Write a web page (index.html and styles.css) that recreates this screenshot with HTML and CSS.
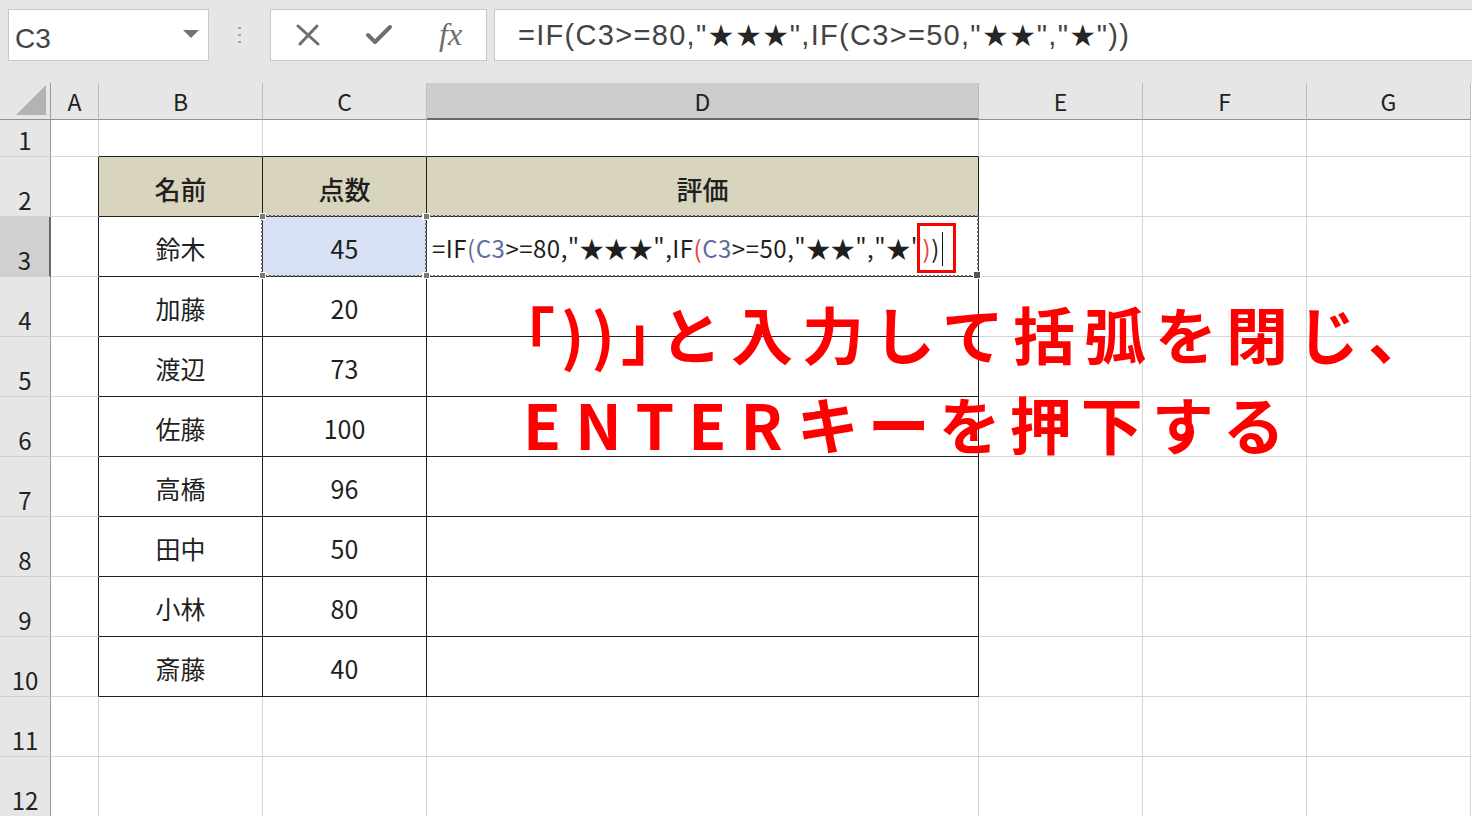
FILE: index.html
```html
<!DOCTYPE html>
<html lang="ja">
<head>
    <meta charset="UTF-8">
    <meta name="viewport" content="width=device-width, initial-scale=1.0">
    <title>評価 - IF関数</title>
    <link rel="stylesheet" href="styles.css">
</head>
<body>
    <div class="workbook">
        <!-- name box + formula bar -->
        <div class="formula-bar">
            <div class="name-box">
                <span>C3</span>
                <svg class="drop" width="16" height="8" viewBox="0 0 16 8"><polygon points="0,0 16,0 8,8" fill="#737373"/></svg>
            </div>
            <div class="grip"><i></i><i></i><i></i></div>
            <div class="fx-buttons">
                <svg width="26" height="26" viewBox="0 0 26 26"><path d="M3 4 L23 22 M22 4 L5 22" stroke="#6e6e6e" stroke-width="3" stroke-linecap="round" fill="none"/></svg>
                <svg width="28" height="26" viewBox="0 0 28 26"><path d="M3 13 L10 20 L25 5" stroke="#6e6e6e" stroke-width="4" stroke-linecap="round" stroke-linejoin="round" fill="none"/></svg>
                <span class="fx">fx</span>
            </div>
            <div class="formula-input">=IF(C3&gt;=80,"<b>★★★</b>",IF(C3&gt;=50,"<b>★★</b>","<b>★</b>"))</div>
        </div>

        <div class="sheet">
            <!-- column headers -->
            <div class="ch corner"><svg width="32" height="32" viewBox="0 0 32 32"><polygon points="31,1 31,31 1,31" fill="#b3b3b3"/></svg></div>
            <div class="ch">A</div>
            <div class="ch">B</div>
            <div class="ch">C</div>
            <div class="ch active">D</div>
            <div class="ch">E</div>
            <div class="ch">F</div>
            <div class="ch">G</div>

            <!-- row 1 -->
            <div class="rh">1</div>
            <div class="cell"></div>
            <div class="cell top-edge"></div>
            <div class="cell top-edge"></div>
            <div class="cell top-edge"></div>
            <div class="cell"></div>
            <div class="cell"></div>
            <div class="cell"></div>

            <!-- row 2 -->
            <div class="rh">2</div>
            <div class="cell left-edge"></div>
            <div class="cell tc th">名前</div>
            <div class="cell tc th">点数</div>
            <div class="cell tc th">評価</div>
            <div class="cell"></div>
            <div class="cell"></div>
            <div class="cell"></div>

            <!-- row 3 -->
            <div class="rh active">3</div>
            <div class="cell left-edge"></div>
            <div class="cell tc">鈴木</div>
            <div class="cell tc ref">45
                <span class="knob tl"></span><span class="knob tr"></span><span class="knob bl"></span><span class="knob br"></span>
            </div>
            <div class="cell tc editing">
                <span class="entry">=IF<span class="p1">(</span><span class="r">C3</span>&gt;=80,"★★★",IF<span class="p2">(</span><span class="r">C3</span>&gt;=50,"★★","★"<span class="tail"><span class="mark"></span><span class="p2">)</span>)<span class="caret"></span></span></span>
                <span class="knob tl"></span><span class="knob bl"></span><span class="knob br big"></span>
            </div>
            <div class="cell"></div>
            <div class="cell"></div>
            <div class="cell"></div>

            <!-- rows 4-10 -->
            <div class="rh">4</div>
            <div class="cell left-edge"></div>
            <div class="cell tc">加藤</div>
            <div class="cell tc">20</div>
            <div class="cell tc"></div>
            <div class="cell"></div>
            <div class="cell"></div>
            <div class="cell"></div>

            <div class="rh">5</div>
            <div class="cell left-edge"></div>
            <div class="cell tc">渡辺</div>
            <div class="cell tc">73</div>
            <div class="cell tc"></div>
            <div class="cell"></div>
            <div class="cell"></div>
            <div class="cell"></div>

            <div class="rh">6</div>
            <div class="cell left-edge"></div>
            <div class="cell tc">佐藤</div>
            <div class="cell tc">100</div>
            <div class="cell tc"></div>
            <div class="cell"></div>
            <div class="cell"></div>
            <div class="cell"></div>

            <div class="rh">7</div>
            <div class="cell left-edge"></div>
            <div class="cell tc">高橋</div>
            <div class="cell tc">96</div>
            <div class="cell tc"></div>
            <div class="cell"></div>
            <div class="cell"></div>
            <div class="cell"></div>

            <div class="rh">8</div>
            <div class="cell left-edge"></div>
            <div class="cell tc">田中</div>
            <div class="cell tc">50</div>
            <div class="cell tc"></div>
            <div class="cell"></div>
            <div class="cell"></div>
            <div class="cell"></div>

            <div class="rh">9</div>
            <div class="cell left-edge"></div>
            <div class="cell tc">小林</div>
            <div class="cell tc">80</div>
            <div class="cell tc"></div>
            <div class="cell"></div>
            <div class="cell"></div>
            <div class="cell"></div>

            <div class="rh">10</div>
            <div class="cell left-edge"></div>
            <div class="cell tc">斎藤</div>
            <div class="cell tc">40</div>
            <div class="cell tc"></div>
            <div class="cell"></div>
            <div class="cell"></div>
            <div class="cell"></div>

            <!-- rows 11-12 -->
            <div class="rh">11</div>
            <div class="cell"></div>
            <div class="cell"></div>
            <div class="cell"></div>
            <div class="cell"></div>
            <div class="cell"></div>
            <div class="cell"></div>
            <div class="cell"></div>

            <div class="rh">12</div>
            <div class="cell"></div>
            <div class="cell"></div>
            <div class="cell"></div>
            <div class="cell"></div>
            <div class="cell"></div>
            <div class="cell"></div>
            <div class="cell"></div>
        </div>

        <p class="note"><span class="brk">「))」</span>と入力して括弧を閉じ、<br><span class="latin">ENTER</span>キーを押下する</p>
    </div>
</body>
</html>
```

FILE: styles.css
```css
body {
    margin: 0;
    padding: 0;
    background: #fff;
    font-family: "Noto Sans CJK JP", "Noto Sans", sans-serif;
    color: #1f1f1f;
    overflow: hidden;
}
.workbook {
    position: relative;
    width: 1472px;
    height: 816px;
    overflow: hidden;
}

/* formula bar */
.formula-bar {
    display: flex;
    align-items: center;
    height: 83px;
    padding: 0 0 0 8px;
    background: #e6e6e6;
    box-sizing: border-box;
}
.name-box,
.fx-buttons,
.formula-input {
    height: 52px;
    margin-bottom: 14px;
    background: #fff;
    border: 1px solid #c8c8c8;
    box-sizing: border-box;
    display: flex;
    align-items: center;
}
.name-box {
    width: 201px;
    padding: 0 9px 0 6px;
    justify-content: space-between;
    font-family: "Liberation Sans", sans-serif;
    font-size: 28px;
    color: #444;
}
.name-box span {
    padding-top: 8px;
}
.drop {
    margin-top: -2px;
}
.grip {
    width: 61px;
    margin-bottom: 14px;
    display: flex;
    flex-direction: column;
    align-items: center;
    gap: 5px;
}
.grip i {
    width: 3px;
    height: 2px;
    background: #a6a6a6;
}
.fx-buttons {
    width: 217px;
    padding: 0 0 0 24px;
    gap: 44px;
}
.fx {
    font-family: "Liberation Serif", serif;
    font-style: italic;
    font-size: 32px;
    color: #6e6e6e;
    margin-left: 2px;
}
.formula-input {
    flex: 1;
    margin-left: 7px;
    border-right: 0;
    padding: 2px 0 0 23px;
    font-family: "Liberation Sans", sans-serif;
    font-size: 29px;
    color: #444;
    white-space: nowrap;
    letter-spacing: 1.3px;
}
.formula-input b {
    font-family: "DejaVu Sans", sans-serif;
    font-weight: normal;
    font-size: 30px;
    color: #262626;
    letter-spacing: 0.5px;
}

/* grid of cells */
.sheet {
    display: grid;
    grid-template-columns: 51px 48px 164px 164px 552px 164px 164px 164px;
    grid-template-rows: 37px 37px repeat(11, 60px);
}
.ch {
    display: flex;
    align-items: center;
    justify-content: center;
    background: #e6e6e6;
    border-right: 1px solid #bdbdbd;
    border-bottom: 1px solid #8f8f8f;
    box-sizing: border-box;
    font-size: 23px;
    color: #222;
}
.ch.corner {
    justify-content: flex-end;
    align-items: flex-end;
    padding: 0 3px 3px 0;
    border-right: 1px solid #9b9b9b;
}
.ch.active {
    background: #cdcdcd;
    border-bottom: 2px solid #5f6f63;
}
.rh {
    display: flex;
    align-items: flex-end;
    justify-content: center;
    padding-bottom: 1px;
    background: #e6e6e6;
    border-right: 1px solid #9b9b9b;
    border-bottom: 1px solid #d0d0d0;
    box-sizing: border-box;
    font-size: 24px;
    line-height: 30px;
    color: #222;
}
.rh.active {
    background: #d0d0d0;
    border-right: 2px solid #5f6f63;
}
.cell {
    position: relative;
    display: flex;
    align-items: center;
    justify-content: center;
    border-right: 1px solid #d6d6d6;
    border-bottom: 1px solid #d6d6d6;
    box-sizing: border-box;
    font-size: 25px;
    padding-top: 3px;
}
.cell.top-edge {
    border-bottom-color: #1f1f1f;
}
.cell.left-edge {
    border-right-color: #1f1f1f;
}
.cell.tc {
    border-right-color: #1f1f1f;
    border-bottom-color: #1f1f1f;
}
.cell.th {
    background: #d9d4bd;
    font-weight: 500;
    font-size: 26px;
}

/* referenced cell C3 */
.cell.ref {
    background: #d9e1f4;
}
.cell.ref::after,
.cell.editing::after {
    content: "";
    position: absolute;
    inset: -2px -1px -1px -2px;
    border: 2px dotted #5d5d5d;
    pointer-events: none;
}
.knob {
    position: absolute;
    width: 5px;
    height: 5px;
    background: #7a7a7a;
    border: 1px solid #fff;
    z-index: 2;
}
.knob.tl { top: -4px; left: -4px; }
.knob.tr { top: -4px; right: -3px; }
.knob.bl { bottom: -3px; left: -4px; }
.knob.br { bottom: -3px; right: -3px; }
.knob.big {
    width: 6px;
    height: 6px;
    background: #555;
}

/* cell being edited */
.cell.editing {
    justify-content: flex-start;
    padding-left: 5px;
    white-space: nowrap;
}
.entry {
    font-size: 24px;
    letter-spacing: 0.5px;
}
.entry .r,
.entry .p1 {
    color: #5b6f9c;
}
.entry .p2 {
    color: #e0443c;
}
.tail {
    position: relative;
}
.caret {
    display: inline-block;
    width: 1px;
    height: 34px;
    margin-left: 2px;
    vertical-align: -8px;
    background: #111;
}
.mark {
    position: absolute;
    left: -6px;
    top: -7px;
    width: 39px;
    height: 50px;
    border: 3px solid #ff0000;
    box-sizing: border-box;
}

/* red instruction text */
.note {
    position: absolute;
    left: 523px;
    top: 288px;
    margin: 0;
    font-size: 62px;
    font-weight: 700;
    line-height: 90px;
    letter-spacing: 9px;
    color: #ff0000;
    white-space: nowrap;
}
.note .brk {
    font-feature-settings: "palt";
    letter-spacing: 7px;
}
.note .latin {
    letter-spacing: 14px;
}
```
